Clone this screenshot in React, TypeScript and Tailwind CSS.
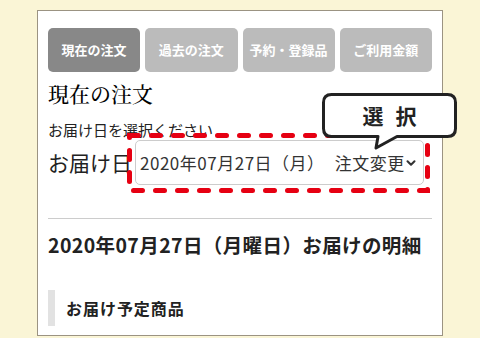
import { ChevronDown } from "lucide-react";

const TABS = ["現在の注文", "過去の注文", "予約・登録品", "ご利用金額"];

/** Red dashed frame drawn around the date select. */
function DashedFrame() {
  return (
    <svg className="absolute left-[125px] top-[131px]" width="308" height="64" aria-hidden>
      <rect
        x="4.5"
        y="4.5"
        width="298"
        height="55"
        fill="none"
        stroke="#e60012"
        strokeWidth="5"
        strokeDasharray="9 13"
        strokeLinecap="round"
      />
    </svg>
  );
}

/** Speech bubble with the "選 択" hint. */
function Callout() {
  return (
    <div className="absolute left-[318px] top-[90px] h-[62px] w-[144px]">
      <svg className="absolute inset-0" width="144" height="62" aria-hidden>
        <path
          d="M13.5 4.5 H129.5 Q137.5 4.5 137.5 12.5 V38.5 Q137.5 46.5 129.5 46.5 H79 L58 58 L60 46.5 H13.5 Q5.5 46.5 5.5 38.5 V12.5 Q5.5 4.5 13.5 4.5 Z"
          fill="#fff"
          stroke="#222"
          strokeWidth="3"
          strokeLinejoin="round"
        />
      </svg>
      <div className="absolute left-[4px] top-[3px] flex h-[45px] w-[135px] items-center justify-center gap-[12px] text-[21px] font-bold text-[#222]">
        <span>選</span>
        <span>択</span>
      </div>
    </div>
  );
}

export default function App() {
  return (
    <div
      className="relative h-[338px] w-[480px] overflow-hidden bg-[#faf5d6] pt-[10px] text-[#222]"
      style={{ fontFamily: '"Noto Sans CJK JP", "Noto Sans", sans-serif' }}
    >
      <div className="ml-[37px] w-[406px] border border-[#9b9382] bg-white px-[10px] pb-[9px] pt-[17px]">
        {/* tabs */}
        <div className="grid grid-cols-4 gap-[5px]">
          {TABS.map((t, i) => (
            <div
              key={t}
              className={`flex h-[44px] items-center justify-center rounded-[5px] text-[13px] font-bold text-white ${
                i === 0 ? "bg-[#888888]" : "bg-[#bbbbbb]"
              }`}
            >
              {t}
            </div>
          ))}
        </div>

        <h1
          className="mt-[7px] text-[21px] font-medium leading-[28px] text-black"
          style={{ fontFamily: '"Noto Serif CJK JP", "Noto Sans CJK JP", serif' }}
        >
          現在の注文
        </h1>

        <p className="mt-[14px] text-[15px] leading-[18px]">お届け日を選択ください</p>

        <div className="mt-[1px] flex items-center gap-[3px]">
          <span className="w-[84px] shrink-0 whitespace-nowrap text-[21px]">お届け日</span>
          <div className="flex h-[45px] w-[289px] items-center justify-between rounded-[5px] border border-[#cccccc] pl-[4px] pr-[5px] text-[17px] tracking-[0.03em] text-[#333]">
            <span className="flex overflow-hidden whitespace-nowrap">
              <span>2020年07月27日（月）</span>
              <span className="ml-[10px]">注文変更</span>
            </span>
            <ChevronDown className="h-[14px] w-[14px] shrink-0" strokeWidth={3.5} />
          </div>
        </div>

        <div className="mt-[33px] border-t border-[#cccccc]" />

        <h2 className="mt-[13px] whitespace-nowrap text-[19.5px] font-bold leading-[26px] tracking-[0.02em]">
          2020年07月27日（月曜日）お届けの明細
        </h2>

        <div className="mt-[32px] flex h-[36px] items-center border-l-[7px] border-[#e2e2e2] pl-[11px] text-[16px] font-bold tracking-[0.06em]">
          お届け予定商品
        </div>
      </div>

      <DashedFrame />
      <Callout />
    </div>
  );
}
